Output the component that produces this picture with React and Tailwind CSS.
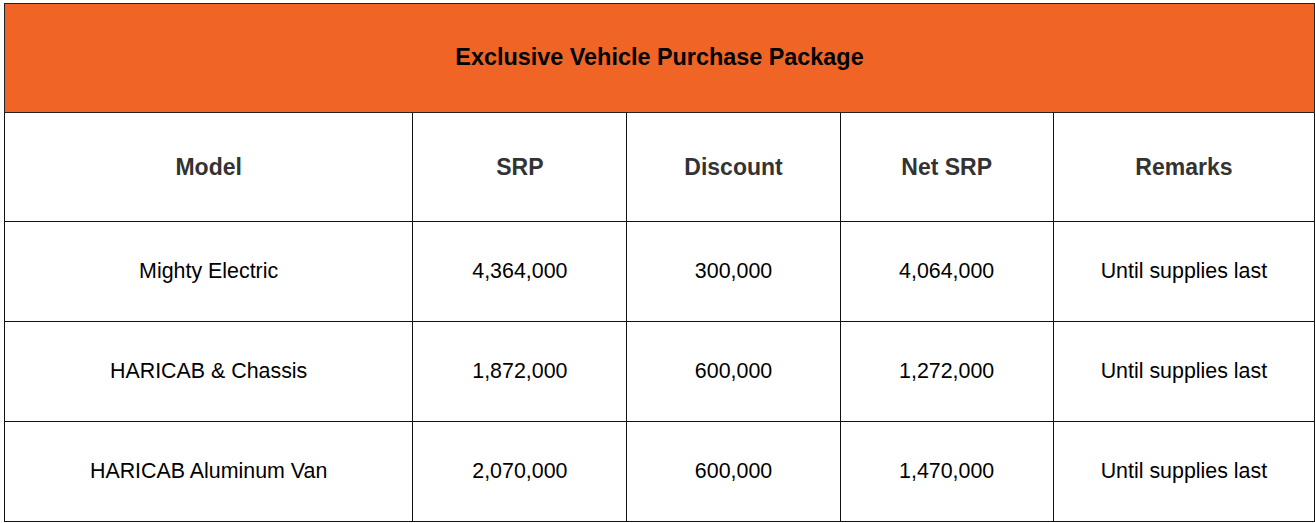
const columns = ["Model", "SRP", "Discount", "Net SRP", "Remarks"]

const rows = [
    ["Mighty Electric", "4,364,000", "300,000", "4,064,000", "Until supplies last"],
    ["HARICAB & Chassis", "1,872,000", "600,000", "1,272,000", "Until supplies last"],
    ["HARICAB Aluminum Van", "2,070,000", "600,000", "1,470,000", "Until supplies last"],
]

const widths = ["w-[408px]", "w-[214px]", "w-[213px]", "w-[213px]", "w-[261px]"]

export default function App() {
    return (
        <div className="bg-white pl-[4px] pt-[3px] font-['Liberation_Sans',Arial,sans-serif]">
            <table className="w-[1311px] table-fixed border-collapse border border-[#333333] text-center">
                <colgroup>
                    {widths.map((w, i) => (
                        <col key={i} className={w} />
                    ))}
                </colgroup>
                <thead>
                    <tr className="h-[109px] bg-[#f06526]">
                        <th colSpan={5} className="border border-[#222222] text-[23.4px] font-bold text-black">
                            Exclusive Vehicle Purchase Package
                        </th>
                    </tr>
                    <tr className="h-[109px]">
                        {columns.map((c) => (
                            <th key={c} className="border border-[#111111] text-[23px] font-bold text-[#333333]">
                                {c}
                            </th>
                        ))}
                    </tr>
                </thead>
                <tbody>
                    {rows.map((r) => (
                        <tr key={r[0]} className="h-[100px]">
                            {r.map((cell, i) => (
                                <td key={i} className="border border-[#111111] text-[21.4px] text-black">
                                    {cell}
                                </td>
                            ))}
                        </tr>
                    ))}
                </tbody>
            </table>
        </div>
    )
}
